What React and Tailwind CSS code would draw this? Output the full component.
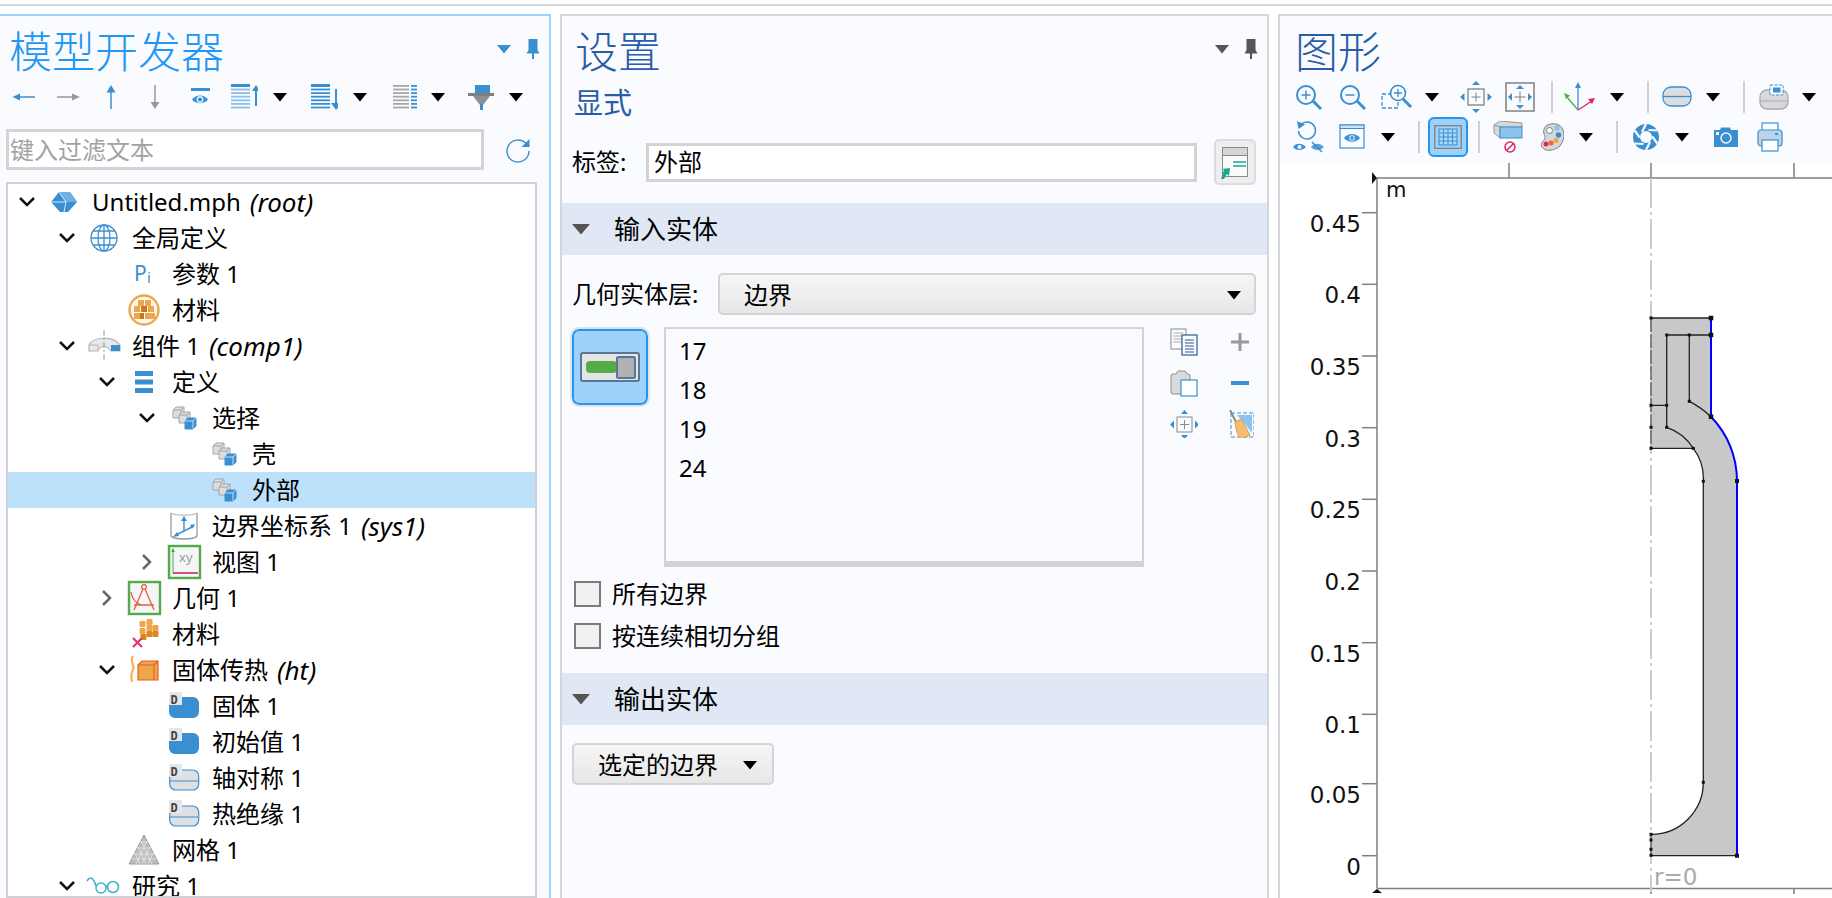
import React from "react";

const BLUE = "#3a8fd0";

function Ic({ className = "", w = 28, h = 28, children }) {
  return (
    <svg width={w} height={h} viewBox={`0 0 ${w} ${h}`} className={`shrink-0 ${className}`}>
      {children}
    </svg>
  );
}

function Drop({ className = "", color = "#000" }) {
  return (
    <Ic w={16} h={10} className={className}>
      <polygon points="1,1 15,1 8,9.5" fill={color} />
    </Ic>
  );
}

function Sep({ className = "" }) {
  return <div className={`w-[2px] h-[32px] bg-[#cfd0d4] shrink-0 ${className}`} />;
}

function Pin({ color }) {
  return (
    <Ic w={14} h={22}>
      <path d="M2.5 1h9v11l2 3.5H.5l2-3.5z" fill={color} />
      <rect x="6" y="15" width="2" height="6" fill={color} />
    </Ic>
  );
}

/* ---- left toolbar ---- */
const ArrowL = ({ c, className }) => (
  <Ic className={className}>
    <path d="M9 14h16" stroke={c} strokeWidth="1.5" />
    <polygon points="2.5,14 10,10.5 10,17.5" fill={c} />
  </Ic>
);
const ArrowR = ({ c, className }) => (
  <Ic className={className}>
    <path d="M3 14h16" stroke={c} strokeWidth="1.5" />
    <polygon points="26,14 18,10.5 18,17.5" fill={c} />
  </Ic>
);
const ArrowU = ({ c, className }) => (
  <Ic className={className}>
    <path d="M14 8v18" stroke={c} strokeWidth="1.5" />
    <polygon points="14,2 18.5,9.5 9.5,9.5" fill={c} />
  </Ic>
);
const ArrowD = ({ c, className }) => (
  <Ic className={className}>
    <path d="M14 2v18" stroke={c} strokeWidth="1.5" />
    <polygon points="14,26 18.5,19 9.5,19" fill={c} />
  </Ic>
);
const EyeBar = ({ className }) => (
  <Ic className={className}>
    <rect x="5" y="5" width="19" height="3" fill={BLUE} />
    <path d="M6 16.5c4-5.5 12-5.5 16 0-4 5-12 5-16 0z" fill={BLUE} />
    <circle cx="14" cy="16.5" r="3.4" fill="#dceefa" />
    <circle cx="14" cy="16.5" r="2" fill={BLUE} />
  </Ic>
);
const Lines = ({ c, x = 1, w = 19, n = 7 }) =>
  Array.from({ length: n }).map((_, i) => (
    <rect key={i} x={x} y={2 + i * 3.6} width={w} height="1.8" fill={c} />
  ));
const ListUp = ({ className }) => (
  <Ic className={className}>
    <Lines c="#8cc0e8" />
    <rect x="1" y="1" width="19" height="3" fill={BLUE} />
    <path d="M26 8v15" stroke={BLUE} strokeWidth="2" />
    <polygon points="26,2 30,8 22,8" fill={BLUE} />
  </Ic>
);
const ListDown = ({ className }) => (
  <Ic className={className}>
    <Lines c={BLUE} />
    <rect x="1" y="1" width="19" height="3" fill={BLUE} />
    <path d="M26 6v15" stroke={BLUE} strokeWidth="2" />
    <polygon points="26,27 31,20 21,20" fill={BLUE} />
  </Ic>
);
const ListGray = ({ className }) => (
  <Ic className={className}>
    <Lines c="#a8a8a8" x={3} w={16} n={7} />
    {[0, 1, 2, 3, 4, 5, 6].map((i) => (
      <rect key={i} x="21" y={2 + i * 3.6} width="6" height="1.8" fill={BLUE} />
    ))}
  </Ic>
);
const Filter = ({ className }) => (
  <Ic className={className}>
    <rect x="7" y="2" width="15" height="8" fill={BLUE} />
    <rect x="0" y="10" width="26" height="3" fill="#7e7e7e" />
    <polygon points="5,13 22,13 15,22 12,22" fill="#8e8e8e" />
    <rect x="12" y="21" width="3" height="6" fill={BLUE} />
  </Ic>
);

/* ---- tree icons ---- */
const T = ({ children }) => (
  <svg width="36" height="36" viewBox="0 0 36 36">
    {children}
  </svg>
);
const RootIc = () => (
  <T>
    <polygon points="5,18 13,8 24,8 31,18 22,28 14,28" fill={BLUE} />
    <polygon points="13,8 24,8 31,18 20,18" fill="#6fb0e2" />
    <path d="M5 18h15l-2 10M20 18l-7-10" fill="none" stroke="#eaf4fc" strokeWidth="0.9" />
  </T>
);
const GlobeIc = () => (
  <T>
    <g fill="none" stroke={BLUE} strokeWidth="1.3">
      <circle cx="18" cy="18" r="13" />
      <ellipse cx="18" cy="18" rx="6" ry="13" />
      <path d="M18 5v26M5 18h26M7 11h22M7 25h22" />
    </g>
  </T>
);
const PiIc = () => (
  <T>
    <text x="8" y="25" fontSize="21" fill={BLUE} className="font-['Noto_Sans',sans-serif]">P</text>
    <text x="21" y="27" fontSize="15" fill={BLUE} className="font-['Noto_Sans',sans-serif]">i</text>
  </T>
);
const MatCircleIc = () => (
  <T>
    <circle cx="18" cy="18" r="14.5" fill="#fffaf3" stroke="#eda64a" strokeWidth="2.4" />
    {[[12, 8], [19, 8], [8, 14], [15, 14], [22, 14], [12, 21], [19, 21], [8, 21], [23, 21]].map(([x, y], i) => (
      <rect key={i} x={x} y={y} width="6" height="6" fill={i === 3 || i === 5 ? "#c97a1e" : "#eda64a"} />
    ))}
  </T>
);
const CompIc = () => (
  <T>
    <path d="M3 17C6 9 27 7 34 17v6h-9c-4-6-11-6-13 0H3z" fill="#e8e8ea" stroke="#b5b6b8" strokeWidth="1.2" />
    <path d="M3 17h9v6" fill="none" stroke="#b5b6b8" />
    <rect x="25" y="17" width="9" height="6" fill={BLUE} />
    <path d="M18 2v32" stroke="#9a9a9a" strokeDasharray="6 2 2 2" />
  </T>
);
const DefIc = () => (
  <T>
    <rect x="9" y="7" width="18" height="5" fill={BLUE} />
    <rect x="9" y="15.5" width="18" height="5" fill={BLUE} />
    <rect x="9" y="24" width="18" height="5" fill={BLUE} />
  </T>
);
const Cube = ({ x, y, blue }) => {
  const line = blue ? "#cfe5f7" : "#a4a5a7";
  return (
    <g>
      <polygon
        points={`${x},${y + 3} ${x + 3},${y} ${x + 11},${y} ${x + 11},${y + 8} ${x + 8},${y + 11} ${x},${y + 11}`}
        fill={blue ? BLUE : "#dcdddf"}
        stroke={blue ? BLUE : "#a4a5a7"}
      />
      <path d={`M${x} ${y + 3}h8v8M${x + 8} ${y + 3}l3-3`} fill="none" stroke={line} strokeWidth={blue ? 0.9 : 1} />
    </g>
  );
};
const SelIc = () => (
  <T>
    <Cube x={7} y={7} />
    <Cube x={13} y={12} />
    <Cube x={19} y={18} blue />
  </T>
);
const SysIc = () => (
  <T>
    <path d="M5 5v23c3 4 23 4 26 0V5" fill="none" stroke="#9a9a9a" strokeWidth="1.3" />
    <path d="M5 5c3 3 23 3 26 0" fill="none" stroke="#9a9a9a" strokeWidth="1" opacity="0.8" />
    <path d="M18 23V12M18 23l10-5M18 23l-8 4" stroke={BLUE} strokeWidth="1.4" fill="none" />
    <polygon points="18,8 21,13 15,13" fill={BLUE} />
    <polygon points="29,16 26,21 24,17" fill={BLUE} />
    <polygon points="7,29 13,28 11,24" fill={BLUE} />
  </T>
);
const ViewIc = () => (
  <T>
    <rect x="3" y="2" width="31" height="32" fill="#f4f5f5" stroke="#55a84c" strokeWidth="2.4" />
    <path d="M7 5v24h24" fill="none" stroke="#55a84c" strokeWidth="1" />
    <path d="M7 29h25" stroke="#e0245e" strokeWidth="1.4" />
    <polygon points="7,4 9,8 5,8" fill="#55a84c" />
    <text x="13" y="18" fontSize="13" fill="#9a9a9a" className="font-['Noto_Sans',sans-serif]">xy</text>
  </T>
);
const GeoIc = () => (
  <T>
    <rect x="3" y="2" width="31" height="32" fill="#f4f5f5" stroke="#55a84c" strokeWidth="2.4" />
    <g fill="none" stroke="#e2603f" strokeWidth="1.3">
      <circle cx="18" cy="7" r="2.4" />
      <path d="M17 9L8 30M19 9l9 21M8 25h20" />
      <path d="M5 12c1 7 5 11 10 13" />
    </g>
  </T>
);
const MatXIc = () => (
  <T>
    {[[14, 5], [21, 3], [27, 9], [21, 9], [14, 12], [21, 15], [27, 15], [15, 18]].map(([x, y], i) => (
      <rect key={i} x={x - 0.5} y={y} width="6" height="6" rx="1.2" fill={i > 4 ? "#d98726" : "#eda64a"} />
    ))}
    <path d="M7 22l9 9M16 22l-9 9" stroke="#e0386b" strokeWidth="2.2" />
  </T>
);
const HeatIc = () => (
  <T>
    <path d="M7 4c-4 7 3 10 0 14-2 3-2 7-1 12" fill="none" stroke="#f2b25a" strokeWidth="2.2" />
    <polygon points="12,13 16,9 32,9 32,28 12,28" fill="#eda64a" stroke="#e65a27" strokeWidth="1.2" />
    <path d="M12 13h16v15M28 13l4-4" fill="none" stroke="#e65a27" strokeWidth="1.1" />
  </T>
);
const DBadge = () => (
  <>
    <rect x="0" y="0" width="13" height="13" fill="#e6e6e8" />
    <text x="1.5" y="11.5" fontSize="12" fontWeight="700" fill="#444" className="font-['DejaVu_Sans_Mono',monospace]">D</text>
  </>
);
const DBlueIc = () => (
  <T>
    <g transform="translate(3 4)">
      <path d="M0 11h11V5h13a6 6 0 0 1 6 6v9a6 6 0 0 1-6 6H6a6 6 0 0 1-6-6z" fill={BLUE} />
      <DBadge />
    </g>
  </T>
);
const DGrayIc = () => (
  <T>
    <g transform="translate(3 4)">
      <path d="M.7 11h11V6h12a6 6 0 0 1 6 6v8a6 6 0 0 1-6 6H6.7a6 6 0 0 1-6-6z" fill="#dedfe1" stroke={BLUE} strokeWidth="1.2" />
      <path d="M1 17h28" stroke={BLUE} strokeWidth="1" />
      <DBadge />
    </g>
  </T>
);
const MeshIc = () => (
  <T>
    <polygon points="18,3 33,32 3,32" fill="#bcbdbf" stroke="#9a9b9d" />
    <g stroke="#e8e8ea" strokeWidth="0.8" fill="none">
      <path d="M14 10h8M11 16h14M8 22h20M5.5 27h25" />
      <path d="M15 9l11 23M12 15l8 17M9 21l5 11M21 9L10 32M24 15l-8 17M27 21l-5 11" />
    </g>
  </T>
);
const StudyIc = () => (
  <T>
    <g fill="none" stroke="#3fb0c8" strokeWidth="1.5">
      <path d="M1 13c3-5 6-4 9 5" />
      <circle cx="15" cy="20" r="5" />
      <circle cx="27" cy="19" r="5.5" />
      <path d="M20 19c1-1 1.5-1 2 0" />
    </g>
  </T>
);

const rows = [
  { level: 0, open: true, icon: <RootIc />, text: "Untitled.mph", em: "(root)" },
  { level: 1, open: true, icon: <GlobeIc />, text: "全局定义" },
  { level: 2, icon: <PiIc />, text: "参数 1" },
  { level: 2, icon: <MatCircleIc />, text: "材料" },
  { level: 1, open: true, icon: <CompIc />, text: "组件 1", em: "(comp1)" },
  { level: 2, open: true, icon: <DefIc />, text: "定义" },
  { level: 3, open: true, icon: <SelIc />, text: "选择" },
  { level: 4, icon: <SelIc />, text: "壳" },
  { level: 4, icon: <SelIc />, text: "外部", selected: true },
  { level: 3, icon: <SysIc />, text: "边界坐标系 1", em: "(sys1)" },
  { level: 3, open: false, icon: <ViewIc />, text: "视图 1" },
  { level: 2, open: false, icon: <GeoIc />, text: "几何 1" },
  { level: 2, icon: <MatXIc />, text: "材料" },
  { level: 2, open: true, icon: <HeatIc />, text: "固体传热", em: "(ht)" },
  { level: 3, icon: <DBlueIc />, text: "固体 1" },
  { level: 3, icon: <DBlueIc />, text: "初始值 1" },
  { level: 3, icon: <DGrayIc />, text: "轴对称 1" },
  { level: 3, icon: <DGrayIc />, text: "热绝缘 1" },
  { level: 2, icon: <MeshIc />, text: "网格 1" },
  { level: 1, open: true, icon: <StudyIc />, text: "研究 1" },
];

function Chevron({ open }) {
  if (open === undefined) return <div className="w-[24px] shrink-0" />;
  return (
    <svg width="24" height="24" viewBox="0 0 24 24" className="shrink-0">
      {open ? (
        <path d="M5 8l7 7 7-7" fill="none" stroke="#111" strokeWidth="2.5" />
      ) : (
        <path d="M8 5l7 7-7 7" fill="none" stroke="#666" strokeWidth="2.5" />
      )}
    </svg>
  );
}

function TreeRow({ row }) {
  return (
    <div
      className={`h-[36px] flex items-center text-[24px] leading-none whitespace-nowrap text-black ${row.selected ? "bg-[#bde0fb]" : ""}`}
      style={{ paddingLeft: 7 + row.level * 40 }}
    >
      <Chevron open={row.open} />
      <div className="ml-[7px] w-[36px] h-[36px] shrink-0">{row.icon}</div>
      <span className="ml-[10px]">{row.text}</span>
      {row.em && <em className="ml-[9px] text-[26px]">{row.em}</em>}
    </div>
  );
}

function PanelHead({ title, className, pad, color, pinColor }) {
  return (
    <div className="h-[61px] flex justify-between pr-[9px]">
      <div className={`text-[43px] leading-none font-light pt-[14px] ${pad} ${className}`}>{title}</div>
      <div className="flex items-center gap-[14px] pt-[4px]">
        <Drop color={color} />
        <Pin color={pinColor} />
      </div>
    </div>
  );
}

function ModelPanel() {
  return (
    <div className="w-[551px] shrink-0 border-t-2 border-r-2 border-[#9fd0f8] bg-[#fafbff] flex flex-col overflow-hidden">
      <PanelHead title="模型开发器" pad="pl-[9px]" className="text-[#2196f3]" color={BLUE} pinColor={BLUE} />
      <div className="h-[40px] flex items-center">
        <ArrowL c={BLUE} className="ml-[10px]" />
        <ArrowR c="#999" className="ml-[16px]" />
        <ArrowU c={BLUE} className="ml-[15px]" />
        <ArrowD c="#999" className="ml-[16px]" />
        <EyeBar className="ml-[17px]" />
        <ListUp className="ml-[16px]" />
        <Drop className="ml-[14px]" />
        <ListDown className="ml-[22px]" />
        <Drop className="ml-[14px]" />
        <ListGray className="ml-[22px]" />
        <Drop className="ml-[12px]" />
        <Filter className="ml-[22px]" />
        <Drop className="ml-[12px]" />
      </div>
      <div className="mt-[12px] flex items-center">
        <div className="ml-[6px] w-[478px] h-[41px] border-[3px] border-[#d3d4d8] bg-white flex items-center pl-[1px] text-[24px] text-[#a3a3a3] leading-none">
          键入过滤文本
        </div>
        <svg width="28" height="28" viewBox="0 0 28 28" className="ml-[20px]">
          <path d="M22 7.5A11 11 0 1 0 25 15" fill="none" stroke={BLUE} strokeWidth="1.4" />
          <polygon points="25.5,3 25.5,11 17.5,11" fill={BLUE} />
        </svg>
      </div>
      <div className="mt-[12px] ml-[6px] w-[531px] flex-1 border-2 border-[#cfd0d6] bg-white overflow-hidden">
        {rows.map((row) => (
          <TreeRow key={row.text + row.level} row={row} />
        ))}
      </div>
    </div>
  );
}

function SectionHead({ title }) {
  return (
    <div className="h-[52px] bg-[#dfe8f4] flex items-center pl-[10px]">
      <Ic w={18} h={12}>
        <polygon points="0,1 18,1 9,11.5" fill="#555" />
      </Ic>
      <span className="ml-[24px] text-[26px] leading-none">{title}</span>
    </div>
  );
}

function Check({ label }) {
  return (
    <div className="h-[42px] flex items-center pl-[12px]">
      <div className="w-[27px] h-[26px] border-2 border-[#7b7b7b] bg-[#f1f1f1]" />
      <span className="ml-[11px] text-[24px] leading-none">{label}</span>
    </div>
  );
}

function SettingsPanel() {
  return (
    <div className="w-[709px] shrink-0 ml-[9px] border-t-2 border-x-2 border-[#d5d6da] bg-[#fafbff] text-black flex flex-col overflow-hidden">
      <PanelHead title="设置" pad="pl-[13px]" className="text-[#2a5ca8]" color="#555" pinColor="#555" />
      <div className="h-[50px] pl-[12px] flex items-center text-[29px] leading-none text-[#2a5ca8]">显式</div>
      <div className="mt-[12px] h-[46px] flex items-center pl-[10px]">
        <span className="w-[74px] text-[24px] leading-none">标签:</span>
        <div className="w-[551px] h-[39px] border-[3px] border-[#d3d3d3] bg-white flex items-center pl-[5px] text-[24px] leading-none">外部</div>
        <div className="ml-[17px] w-[42px] h-[46px] rounded-[5px] border-2 border-[#dcdcdc] bg-[#eeeeee] flex items-center justify-center">
          <svg width="28" height="36" viewBox="0 0 28 36">
            <rect x="1.5" y="3.5" width="25" height="29" fill="#fafafa" stroke="#8a8a8a" />
            <rect x="1.5" y="3.5" width="25" height="8" fill="#d4d5d7" stroke="#8a8a8a" />
            <path d="M12 18h13M12 22h13" stroke="#1aa98f" strokeWidth="1.3" />
            <path d="M0 35l3-9-2-1 8-1-1 8-2-2-3 5z" fill="#1aa98f" />
          </svg>
        </div>
      </div>
      <div className="mt-[18px]">
        <SectionHead title="输入实体" />
      </div>
      <div className="mt-[18px] h-[42px] flex items-center pl-[10px]">
        <span className="w-[146px] text-[24px] leading-none whitespace-nowrap">几何实体层:</span>
        <div className="w-[538px] h-[42px] rounded-[5px] border-2 border-[#d4d4d4] bg-gradient-to-b from-[#f6f6f6] to-[#e7e7e7] flex items-center justify-between pl-[24px] pr-[12px] pt-px text-[24px] leading-none">
          边界
          <Drop />
        </div>
      </div>
      <div className="mt-[12px] flex items-start pl-[10px]">
        <div className="mt-[2px] w-[76px] h-[76px] rounded-[7px] border-2 border-[#2196f3] bg-[#9fd2fb] flex items-center justify-center outline-2 outline-[#dfe3e8]">
          <svg width="60" height="30" viewBox="0 0 60 30">
            <rect x="1" y="1" width="58" height="28" rx="2" fill="#e4e5e5" stroke="#5b7596" strokeWidth="2" />
            <rect x="6" y="9" width="31" height="12" rx="4" fill="#55ab48" />
            <rect x="37" y="5" width="18" height="21" rx="1.5" fill="#b0b1b2" stroke="#5b7596" strokeWidth="2" />
          </svg>
        </div>
        <div className="ml-[16px] w-[480px] h-[240px] border-2 border-b-[6px] border-[#d3d3d5] pl-[13px] pt-[2px] text-[24px] leading-[39px]">
          <div>17</div>
          <div>18</div>
          <div>19</div>
          <div>24</div>
        </div>
        <div className="ml-[26px] mt-px grid grid-cols-[28px_28px] gap-x-[28px] gap-y-[13px]">
          <Ic>
            <rect x="1" y="1" width="15" height="20" fill="#fafbff" stroke="#8a8a8a" />
            <path d="M3.5 5h10M3.5 8h10M3.5 11h10M3.5 14h10" stroke="#aaa" />
            <rect x="12" y="7" width="15" height="20" fill="#fafbff" stroke="#2a5a96" strokeWidth="1.2" />
            <path d="M15 12h9M15 15h9M15 18h9M15 21h9M15 24h9" stroke="#2a5a96" />
          </Ic>
          <Ic>
            <path d="M5 14h18M14 5v18" stroke="#999" strokeWidth="3" />
          </Ic>
          <Ic>
            <path d="M11 25H3a2 2 0 0 1-2-2V7a2 2 0 0 1 2-2h3l2-3h7l2 3h1a2 2 0 0 1 2 2v5" fill="#d9dadc" stroke="#8a8a8a" />
            <rect x="11" y="11" width="16" height="16" fill="#fff" stroke={BLUE} strokeWidth="1.2" />
          </Ic>
          <Ic>
            <rect x="5" y="12" width="18" height="4" fill={BLUE} />
          </Ic>
          <Ic>
            <rect x="7" y="7" width="15" height="15" fill="#fafbff" stroke="#8a8a8a" />
            <path d="M14.5 10v9M10 14.5h9" stroke="#8a8a8a" />
            <polygon points="14.5,0 18,4 11,4" fill={BLUE} />
            <polygon points="14.5,29 18,25 11,25" fill={BLUE} />
            <polygon points="0,14.5 4,10.5 4,18.5" fill={BLUE} />
            <polygon points="29,14.5 25,10.5 25,18.5" fill={BLUE} />
          </Ic>
          <Ic>
            <rect x="5" y="3" width="23" height="24" fill="none" stroke={BLUE} strokeDasharray="4 2" />
            <polygon points="11,5 26,5 26,23" fill="#8cc4ee" />
            <path d="M4 0l7 14" stroke="#8a8a8a" strokeWidth="2" />
            <path d="M9 12l6-3 9 16-9 4c-4-4-5-10-6-17z" fill="#f6bd72" stroke="#e09a44" />
          </Ic>
        </div>
      </div>
      <div className="h-[6px]" />
      <Check label="所有边界" />
      <Check label="按连续相切分组" />
      <div className="mt-[16px]">
        <SectionHead title="输出实体" />
      </div>
      <div className="mt-[18px] ml-[10px] w-[202px] h-[42px] rounded-[5px] border-2 border-[#d4d4d4] bg-gradient-to-b from-[#f6f6f6] to-[#e7e7e7] flex items-center pl-[24px] pt-[2px] text-[24px] leading-none">
        选定的边界
        <Drop className="ml-[24px]" />
      </div>
    </div>
  );
}

/* ---- graphics toolbar ---- */
const Mag = ({ sign, className }) => (
  <Ic className={className}>
    <circle cx="12" cy="12" r="9" fill="none" stroke={BLUE} strokeWidth="2" />
    <path d="M19 18l8 8" stroke={BLUE} strokeWidth="3" />
    <path d={sign === "+" ? "M7.5 12h9M12 7.5v9" : "M7.5 12h9"} stroke={BLUE} strokeWidth="1.5" />
  </Ic>
);
const ZoomBox = ({ className }) => (
  <Ic w={32} className={className}>
    <rect x="1" y="11" width="16" height="14" fill="none" stroke={BLUE} strokeWidth="1.3" strokeDasharray="4 2" />
    <circle cx="17" cy="10" r="7.5" fill="#fafbff" stroke={BLUE} strokeWidth="1.6" />
    <path d="M22 16l8 8" stroke={BLUE} strokeWidth="3" />
    <path d="M13 10h8M17 6v8" stroke={BLUE} strokeWidth="1.3" />
  </Ic>
);
const Extents = ({ className }) => (
  <Ic w={32} h={32} className={className}>
    <rect x="8" y="8" width="16" height="16" fill="#fafbff" stroke="#808080" strokeWidth="1.3" />
    <path d="M16 11.5v9M11.5 16h9" stroke="#808080" />
    <polygon points="16,0 20,4 12,4" fill={BLUE} />
    <polygon points="16,32 20,28 12,28" fill={BLUE} />
    <polygon points="0,16 4.5,12 4.5,20" fill={BLUE} />
    <polygon points="32,16 27.5,12 27.5,20" fill={BLUE} />
  </Ic>
);
const Frame = ({ className }) => (
  <Ic w={30} h={30} className={className}>
    <rect x="1" y="1" width="28" height="28" fill="#fafbff" stroke="#808080" strokeWidth="1.5" />
    <path d="M15 9.5v11M9.5 15h11" stroke="#808080" />
    <polygon points="15,3 19,7 11,7" fill={BLUE} />
    <polygon points="15,27 19,23 11,23" fill={BLUE} />
    <polygon points="3,15 7,11 7,19" fill={BLUE} />
    <polygon points="27,15 23,11 23,19" fill={BLUE} />
  </Ic>
);
const Axes = ({ className }) => (
  <Ic w={34} h={30} className={className}>
    <path d="M17 28V4" stroke={BLUE} strokeWidth="1.3" />
    <polygon points="17,0 20,6 14,6" fill={BLUE} />
    <path d="M17 28L6 15" stroke="#55ab48" strokeWidth="1.3" />
    <polygon points="3,11 9,13.5 5,17" fill="#55ab48" />
    <path d="M17 28l14-9" stroke="#e0245e" strokeWidth="1.3" />
    <polygon points="34,16 31,22 27,17" fill="#e0245e" />
  </Ic>
);
const CylIc = ({ className }) => (
  <Ic w={30} h={24} className={className}>
    <rect x="1" y="2" width="28" height="19" rx="8" fill="#dcdddf" stroke={BLUE} strokeWidth="1.3" />
    <path d="M1 11.5h28" stroke={BLUE} strokeWidth="1.3" />
  </Ic>
);
const CylView = ({ className }) => (
  <Ic w={30} h={26} className={className}>
    <rect x="1" y="6" width="28" height="19" rx="7" fill="#d8d9db" stroke="#a8a9ab" strokeWidth="1.3" />
    <path d="M1 17h28" stroke="#a8a9ab" />
    <rect x="11" y="1" width="13" height="10" fill="#fafbff" stroke={BLUE} strokeDasharray="3 1.5" />
    <rect x="14" y="3.5" width="7.5" height="5" fill={BLUE} />
  </Ic>
);
const ResetEye = ({ className }) => (
  <Ic w={34} h={34} className={className}>
    <path d="M10 4.5A8.5 8.5 0 1 1 7.5 11" fill="none" stroke={BLUE} strokeWidth="1.5" />
    <polygon points="6,1 14,4.5 7.5,9" fill={BLUE} />
    <path d="M2 27c3-4.5 9-4.5 13 0-4 4-10 4-13 0z" fill={BLUE} />
    <circle cx="8.5" cy="27" r="2" fill="#fafbff" />
    <path d="M20 27c3-4.5 9-4.5 13 0-3 4-10 4-13 0z" fill={BLUE} opacity="0.85" />
    <path d="M21 22l10 10" stroke={BLUE} strokeWidth="1.5" />
  </Ic>
);
const WinEye = ({ className }) => (
  <Ic w={26} h={26} className={className}>
    <rect x="1" y="1" width="24" height="23" fill="#fafbff" stroke={BLUE} strokeWidth="1.2" />
    <rect x="1" y="1" width="24" height="3.5" fill="#cfe3f5" stroke={BLUE} strokeWidth="1" />
    <path d="M5 14c4-5.5 12-5.5 16 0-4 5-12 5-16 0z" fill={BLUE} />
    <circle cx="13" cy="14" r="3" fill="#bcdcf5" />
    <circle cx="13" cy="14" r="1.7" fill={BLUE} />
  </Ic>
);
const GridBtn = ({ className }) => (
  <div className={`w-[40px] h-[40px] shrink-0 rounded-[6px] border-2 border-[#2196f3] bg-[#9fd2fb] flex items-center justify-center ${className}`}>
    <svg width="28" height="24" viewBox="0 0 28 24">
      <rect x="0.7" y="0.7" width="26.6" height="22.6" fill="none" stroke="#808080" strokeWidth="1.3" />
      <rect x="5" y="4" width="18" height="16" fill="#a9d6fb" stroke={BLUE} />
      <path d="M9.5 4v16M14 4v16M18.5 4v16M5 8h18M5 12h18M5 16h18" stroke={BLUE} />
    </svg>
  </div>
);
const Eraser = ({ className }) => (
  <Ic w={30} h={32} className={className}>
    <polygon points="1,4 7,0 29,2 29,6 7,6" fill="#d6d7d9" stroke="#9a9a9a" />
    <polygon points="1,4 7,6 7,17 1,12" fill="#d6d7d9" stroke="#9a9a9a" />
    <rect x="7" y="6" width="22" height="11" fill="#8cc4ee" stroke={BLUE} />
    <circle cx="17" cy="26" r="5" fill="none" stroke="#e0245e" strokeWidth="1.5" />
    <path d="M13.5 29.5l7-7" stroke="#e0245e" strokeWidth="1.5" />
  </Ic>
);
const Palette = ({ className }) => (
  <Ic w={24} h={28} className={className}>
    <path d="M6 3c5-4 15-3 17 4 2 6 0 12-3 16-3 3-9 5-14 4-5-2-6-6-3-9 3-2 2-5 1-7-1-3 0-6 2-8z" fill="#d6d7d9" stroke="#808080" />
    <circle cx="9.5" cy="7.5" r="3" fill="#fff" stroke="#808080" />
    <circle cx="17" cy="5" r="2.8" fill="#8cc4ee" />
    <circle cx="18.5" cy="12" r="2.8" fill={BLUE} />
    <circle cx="16" cy="17.5" r="2.5" fill="#f2a33a" />
    <circle cx="11" cy="20" r="2.5" fill="#e8692c" />
    <circle cx="6" cy="21" r="2.5" fill="#e0245e" />
  </Ic>
);
const Aperture = ({ className }) => (
  <Ic w={28} h={28} className={className}>
    <circle cx="14" cy="14" r="13" fill={BLUE} />
    <circle cx="14" cy="14" r="6" fill="#fafbff" />
    <g stroke="#fafbff" strokeWidth="2.2">
      <path d="M14 1l-4 8M25.3 7.5L16.5 7M25.3 20.5l-5-7M14 27l4-8M2.7 20.5l8.800.5M2.7 7.5l5 7" />
    </g>
  </Ic>
);
const Camera = ({ className }) => (
  <Ic w={24} h={20} className={className}>
    <path d="M0 3h6l1-2.500h9L17 3h7v17H0z" fill={BLUE} />
    <circle cx="12" cy="11" r="5" fill={BLUE} stroke="#fafbff" strokeWidth="1.4" />
    <rect x="2" y="5" width="3" height="3" fill="#fafbff" />
  </Ic>
);
const Printer = ({ className }) => (
  <Ic w={26} h={30} className={className}>
    <rect x="5" y="1" width="16" height="9" fill="#fafbff" stroke={BLUE} strokeWidth="1.2" />
    <rect x="1" y="8" width="24" height="16" rx="3" fill="#bcd4ea" stroke={BLUE} strokeWidth="1.2" />
    <rect x="18" y="11" width="3" height="2" fill={BLUE} />
    <rect x="5" y="18" width="16" height="11" fill="#fff" stroke={BLUE} strokeWidth="1.2" />
  </Ic>
);

const ticksY = [
  ["0.45", 212.7],
  ["0.4", 284.3],
  ["0.35", 356],
  ["0.3", 427.7],
  ["0.25", 499.3],
  ["0.2", 571],
  ["0.15", 642.7],
  ["0.1", 714.3],
  ["0.05", 783.7],
  ["0", 855.7],
];
const dots = [
  [1651, 318, 3], [1666.7, 335, 3], [1689.3, 335, 3], [1651, 405.3, 3], [1666.7, 405.3, 3], [1689.3, 401.3, 3],
  [1651, 427.3, 3], [1666.7, 427.3, 3], [1651, 448.3, 3], [1693.3, 448.3, 3], [1703.3, 481.3, 3], [1703.3, 782.3, 3],
  [1651, 834.3, 3], [1651, 840, 3], [1651, 849.3, 3], [1651, 855.3, 3],
  [1711, 318, 4.5], [1711, 335, 4.5], [1711, 416.7, 4.5], [1737, 481, 4], [1737, 855.7, 4],
];

function Graph() {
  return (
    <svg width="552" height="735" viewBox="1280 163 552 735" className="block bg-white">
      {[1509, 1651, 1794].map((x) => (
        <path key={x} d={`M${x} 163V178`} stroke="#7f7f7f" strokeWidth="1.5" />
      ))}
      <path d="M1377 178H1832M1377 178V888.5M1377 888.500H1832" stroke="#7f7f7f" strokeWidth="1.5" fill="none" />
      {ticksY.map(([t, y]) => (
        <g key={t}>
          <path d={`M1362 ${y}H1377`} stroke="#7f7f7f" strokeWidth="1.5" />
          <text x="1361" y={y + 19} textAnchor="end" fontSize="23" fill="#111" className="font-['DejaVu_Sans',sans-serif]">
            {t}
          </text>
        </g>
      ))}
      {[1651, 1794].map((x) => (
        <path key={x} d={`M${x} 888V894`} stroke="#7f7f7f" strokeWidth="1.5" />
      ))}
      <polygon points="1372,172 1377,178 1372,184" fill="#111" />
      <polygon points="1372,893 1377,889 1382,893" fill="#111" />
      <text x="1386" y="197" fontSize="21" fill="#111" className="font-['DejaVu_Sans',sans-serif]">m</text>
      <path d="M1651 178V892" stroke="#cccccc" strokeWidth="2" strokeDasharray="30 4 3 4" />
      <path
        d="M1651 318H1711V416.7A92 92 0 0 1 1737 481V855.7H1651V834.3A52 52 0 0 0 1703.3 782.3V481.3A50 50 0 0 0 1693.3 448.3H1651Z"
        fill="#c8c8c8"
      />
      <g fill="none" stroke="#222" strokeWidth="1.3">
        <path d="M1651 318H1711M1666.7 335H1711M1666.7 335V427.3M1689.3 335V401.3M1651 405.3H1666.7" />
        <path d="M1689.3 401.3A92 92 0 0 1 1711 416.7" />
        <path d="M1666.7 427.3A50 50 0 0 1 1693.3 448.3A50 50 0 0 1 1703.3 481.3V782.3A52 52 0 0 1 1651 834.3" />
        <path d="M1651 448.3H1693.3M1651 855.7H1737" />
        <path d="M1651 318V448.3M1651 834.3V855.7" stroke="#555" strokeDasharray="14 2" />
      </g>
      <path d="M1711 318V416.7A92 92 0 0 1 1737 481V855.7" fill="none" stroke="#0000ff" strokeWidth="2" />
      {dots.map(([x, y, s]) => (
        <rect key={`${x}-${y}`} x={x - s / 2} y={y - s / 2} width={s} height={s} fill="#111" />
      ))}
      <text x="1654" y="885" fontSize="23" fill="#aaaaaa" className="font-['DejaVu_Sans',sans-serif]">r=0</text>
    </svg>
  );
}

function GraphicsPanel() {
  return (
    <div className="flex-1 min-w-0 ml-[9px] border-t-2 border-l-2 border-[#d5d6da] bg-[#fafbff] flex flex-col overflow-hidden">
      <div className="h-[61px] pl-[15px] pt-[14px] text-[43px] leading-none font-light text-[#2a5ca8]">图形</div>
      <div className="h-[40px] flex items-center">
        <Mag sign="+" className="ml-[14px]" />
        <Mag sign="-" className="ml-[16px]" />
        <ZoomBox className="ml-[15px]" />
        <Drop className="ml-[11px]" />
        <Extents className="ml-[20px]" />
        <Frame className="ml-[13px]" />
        <Sep className="ml-[16px]" />
        <Axes className="ml-[8px]" />
        <Drop className="ml-[14px]" />
        <Sep className="ml-[22px]" />
        <CylIc className="ml-[13px]" />
        <Drop className="ml-[13px]" />
        <Sep className="ml-[22px]" />
        <CylView className="ml-[14px]" />
        <Drop className="ml-[12px]" />
      </div>
      <div className="h-[40px] flex items-center">
        <ResetEye className="ml-[11px]" />
        <WinEye className="ml-[14px]" />
        <Drop className="ml-[15px]" />
        <Sep className="ml-[22px]" />
        <GridBtn className="ml-[8px]" />
        <Sep className="ml-[10px]" />
        <Eraser className="ml-[13px]" />
        <Palette className="ml-[17px]" />
        <Drop className="ml-[14px]" />
        <Sep className="ml-[22px]" />
        <Aperture className="ml-[14px]" />
        <Drop className="ml-[14px]" />
        <Camera className="ml-[24px]" />
        <Printer className="ml-[19px]" />
      </div>
      <div className="mt-[6px]">
        <Graph />
      </div>
    </div>
  );
}

export default function App() {
  return (
    <div className="w-[1832px] h-[898px] overflow-hidden bg-white flex flex-col font-['Noto_Sans','Noto_Sans_CJK_SC',sans-serif]">
      <div className="mt-[4px] h-[2px] bg-[#d4d5d9] shrink-0" />
      <div className="mt-[8px] flex-1 min-h-0 flex">
        <ModelPanel />
        <SettingsPanel />
        <GraphicsPanel />
      </div>
    </div>
  );
}
